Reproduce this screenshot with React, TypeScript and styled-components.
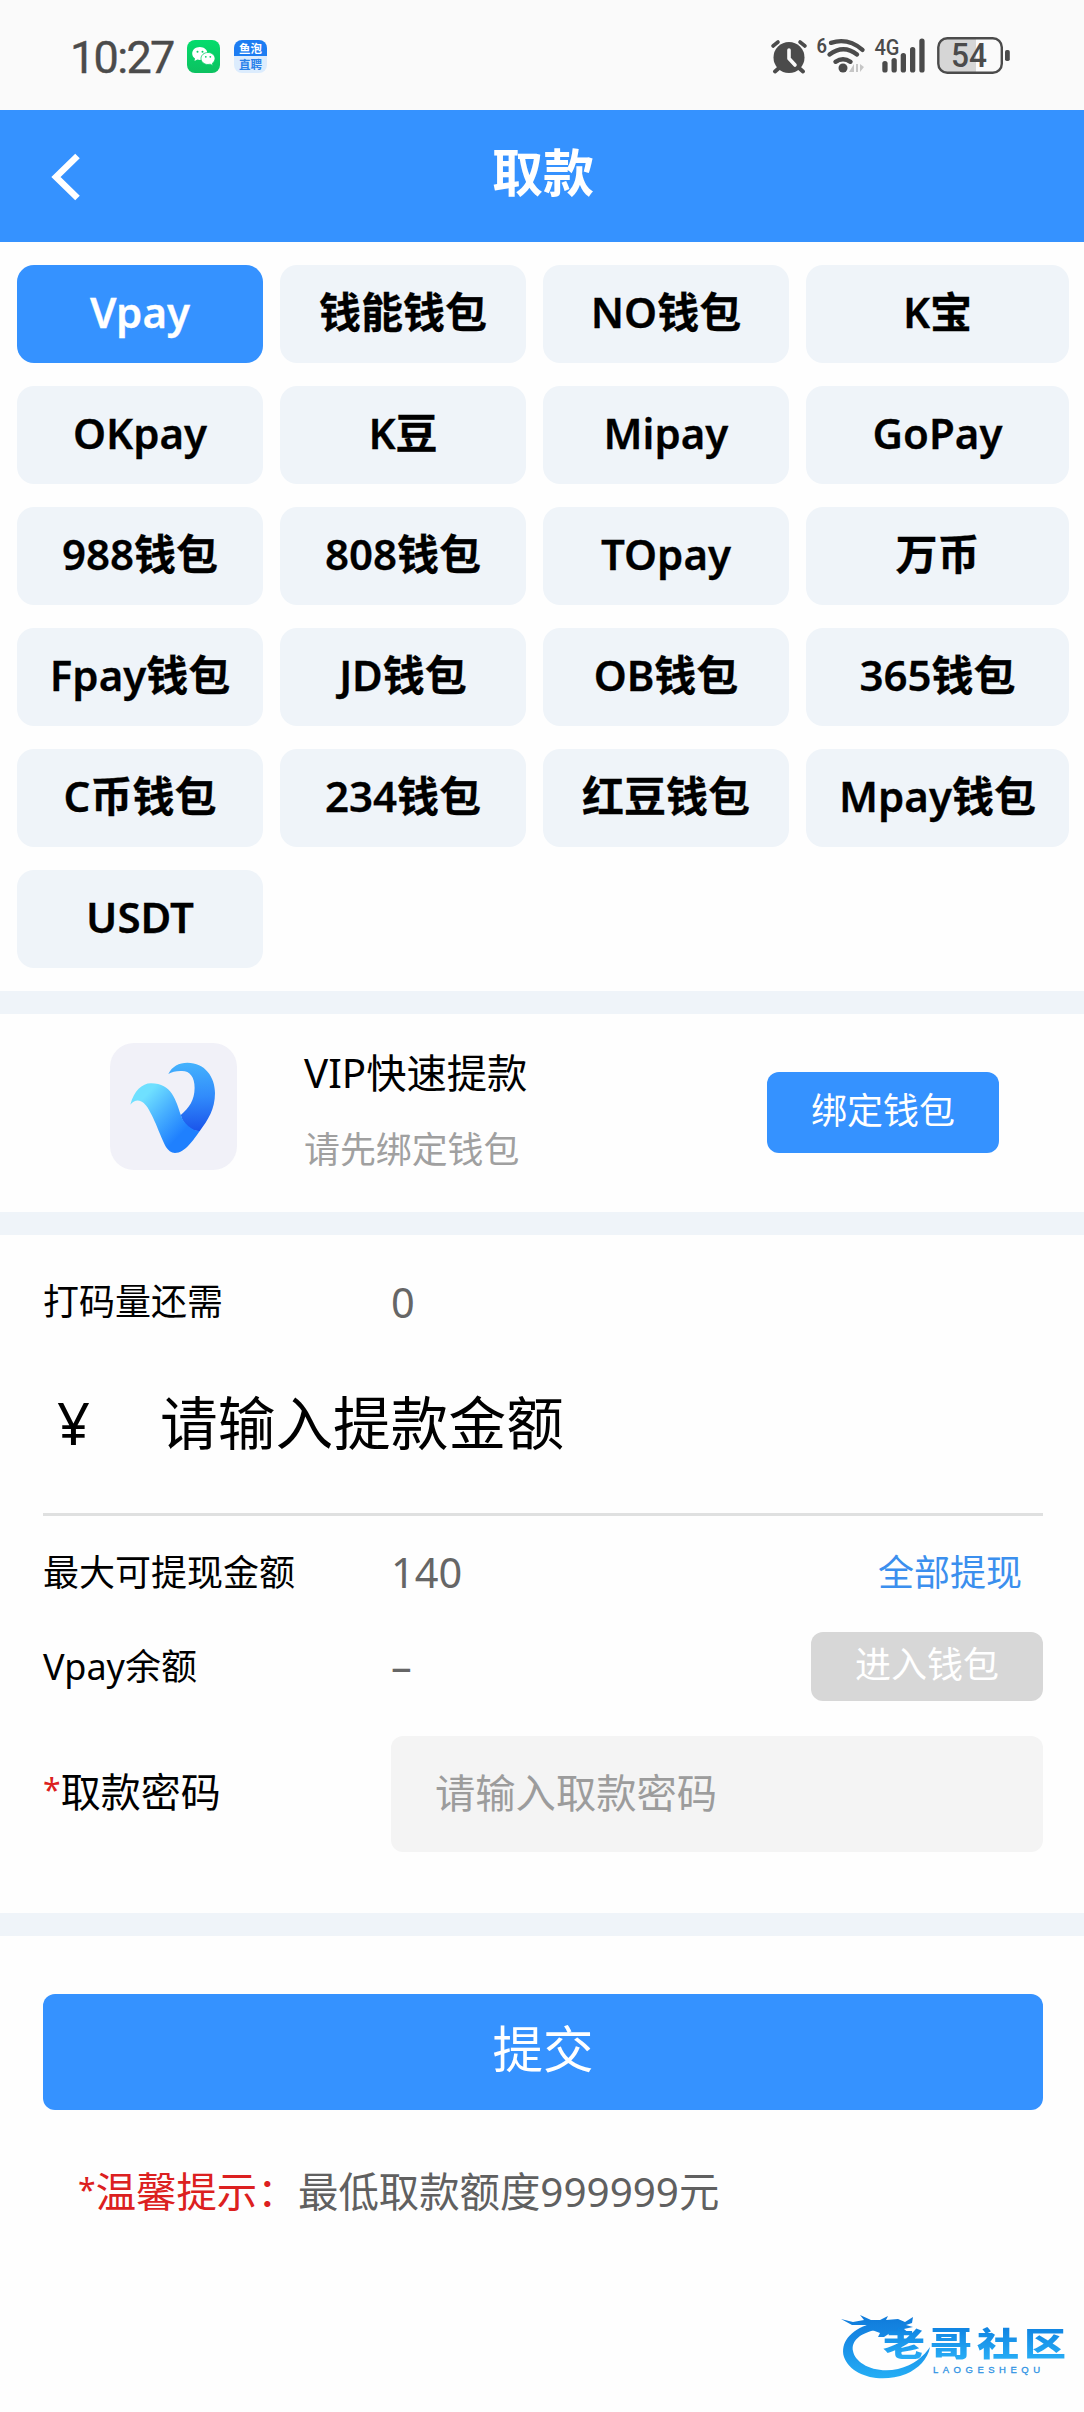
import React, { useState } from "react";
import styled, { createGlobalStyle } from "styled-components";

const sans = `"Noto Sans", "Noto Sans CJK SC", sans-serif`;
const blue = "#3592ff";
const ink = "#4b4b4b";

const GlobalStyle = createGlobalStyle`
  * { box-sizing: border-box; }
  body { margin: 0; background: #fff; }
  button, input { font: inherit; border: 0; padding: 0; margin: 0; }
`;

const Page = styled.div`
  display: flex;
  flex-direction: column;
  width: 1084px;
  height: 2412px;
  background: #fefefe;
  color: #000;
  font-family: ${sans};
  overflow: hidden;
`;

const StatusBar = styled.header`
  display: flex;
  align-items: flex-start;
  justify-content: space-between;
  height: 110px;
  padding: 27px 74px 0 70px;
  background: #fafafa;
  color: ${ink};
`;

const StatusLeft = styled.div`
  display: flex;
  padding-top: 13px;
`;

const Clock = styled.span`
  width: 117px;
  font: 400 45px/36px Roboto, sans-serif;
  letter-spacing: -1.7px;
  -webkit-text-stroke: 0.4px ${ink};
`;

const AppBadge = styled.span`
  display: flex;
  flex-direction: column;
  width: 33px;
  height: 33px;
  margin-right: 14px;
  border-radius: 8px;
  background: linear-gradient(#03dc6c, #0cc160);
`;

const JobBadge = styled(AppBadge)`
  background: linear-gradient(#1d7df2 0 49%, #dcecfd 49% 100%);
`;

const BadgeLine = styled.span<{ $solid?: boolean }>`
  height: 16px;
  font: 700 11.5px/18px ${sans};
  text-align: center;
  color: ${(p) => (p.$solid ? "#fff" : "#2a82ea")};
`;

const StatusIcons = styled.svg`
  display: block;
  width: 240px;
  height: 50px;
`;

const TitleBar = styled.div`
  display: grid;
  grid-template-columns: 130px 1fr 130px;
  align-items: center;
  height: 132px;
  background: ${blue};
  color: #fff;
`;

const BackButton = styled.button`
  display: flex;
  padding: 2px 0 0 51px;
  background: none;
`;

const Title = styled.h1`
  margin: 0;
  padding: 0 0 8px 2px;
  font-size: 51px;
  line-height: 60px;
  font-weight: 700;
  text-align: center;
`;

const WalletGrid = styled.div`
  display: grid;
  grid-template-columns: 246px 246px 246px 263px;
  grid-auto-rows: 98px;
  gap: 23px 17px;
  padding: 23px 15px 23px 17px;
`;

const WalletTab = styled.button<{ $active: boolean }>`
  padding-bottom: 4px;
  border-radius: 17px;
  background: ${(p) => (p.$active ? blue : "#eff4f9")};
  color: ${(p) => (p.$active ? "#fff" : "#000")};
  font-size: 42px;
  line-height: 56px;
  font-weight: 600;
  -webkit-text-stroke: 0.3px currentColor;
  white-space: nowrap;
`;

const Band = styled.div`
  flex: none;
  height: 23px;
  background: #eff4f9;
`;

const BindSection = styled.section`
  display: flex;
  height: 198px;
  padding: 29px 85px 0 110px;
`;

const LogoTile = styled.div`
  width: 127px;
  height: 127px;
  border-radius: 24px;
  background: #f1f1f8;
`;

const BindText = styled.div`
  flex: 1;
  padding-left: 67px;
`;

const BindTitle = styled.div`
  font-size: 40.3px;
  line-height: 60px;
`;

const BindNote = styled.div`
  padding-top: 17px;
  font-size: 35.9px;
  line-height: 60px;
  color: #a0a0a0;
`;

const SmallButton = styled.button<{ $tall?: boolean }>`
  width: 232px;
  height: ${(p) => (p.$tall ? 81 : 69)}px;
  margin-top: ${(p) => (p.$tall ? 29 : 0)}px;
  padding-bottom: 4px;
  border-radius: 12px;
  background: ${(p) => (p.$tall ? blue : "#d7d7d7")};
  color: #fff;
  font-size: 36px;
  line-height: 50px;
`;

const Form = styled.section`
  display: flex;
  flex-direction: column;
  height: 678px;
  padding: 0 41px 0 43px;
`;

const FormRow = styled.div<{ $h: number; $gap?: number }>`
  display: grid;
  grid-template-columns: 348px 1fr auto;
  align-items: center;
  height: ${(p) => p.$h}px;
  margin-bottom: ${(p) => p.$gap ?? 0}px;
`;

const Label = styled.span<{ $big?: boolean }>`
  padding-bottom: ${(p) => (p.$big ? 4 : 0)}px;
  font-size: ${(p) => (p.$big ? 40 : 36)}px;
  line-height: 60px;
`;

const Star = styled.span`
  font-size: 32px;
  line-height: 0;
  vertical-align: 5px;
  color: #dc2020;
`;

const Value = styled.span`
  padding-bottom: 1px;
  font-size: 41.5px;
  line-height: 60px;
  color: #666;
`;

const AllLink = styled.a`
  padding-right: 21px;
  font-size: 36px;
  line-height: 60px;
  color: #3b8fee;
`;

const AmountRow = styled.label`
  display: grid;
  grid-template-columns: 117px 1fr;
  align-items: center;
  box-sizing: content-box;
  height: 107px;
  padding-bottom: 37px;
  font-size: 57.7px;
  line-height: 80px;
  border-bottom: 3px solid #dfe0e0;
`;

const Currency = styled.span`
  padding-left: 14px;
`;

const AmountInput = styled.input`
  width: 100%;
  height: 90px;
  background: none;
  outline: 0;
  &::placeholder { color: #000; opacity: 1; }
`;

const PasswordInput = styled.input`
  grid-column: 2 / 4;
  height: 116px;
  padding: 0 44px 4px;
  border-radius: 12px;
  background: #f4f4f4;
  outline: 0;
  font-size: 40.3px;
  &::placeholder { color: #9c9c9c; opacity: 1; }
`;

const SubmitButton = styled.button`
  flex: none;
  height: 116px;
  margin: 58px 41px 0 43px;
  padding-bottom: 7px;
  border-radius: 12px;
  background: ${blue};
  color: #fff;
  font-size: 50.5px;
  line-height: 70px;
`;

const Hint = styled.p`
  display: flex;
  margin: 52px 0 0 78px;
  font-size: 40.4px;
  line-height: 60px;
  color: #606060;
`;

const HintLead = styled.span`
  width: 220px;
  white-space: nowrap;
  color: #dc2020;
`;

const Watermark = styled.footer`
  display: flex;
  align-self: flex-end;
  width: 244px;
  height: 80px;
  margin-top: 83px;
`;

const Dragon = styled.svg`
  flex: none;
  width: 94px;
  height: 80px;
  margin-right: -51px;
`;

const MarkText = styled.div`
  display: flex;
  flex-direction: column;
  padding-top: 14px;
`;

const MarkName = styled.span`
  height: 46px;
  font: 900 42px/46px "Noto Sans CJK SC", sans-serif;
  letter-spacing: 5px;
  white-space: nowrap;
  transform: scaleY(0.78);
  color: transparent;
  background: linear-gradient(#0d7fe0, #28aef6);
  background-clip: text;
`;

const MarkLatin = styled.span`
  padding-left: 50px;
  font: 400 9.5px/10px "Liberation Sans", sans-serif;
  letter-spacing: 4.5px;
  color: #2f93e4;
  -webkit-text-stroke: 0.3px #2f93e4;
`;

const wallets = [
  "Vpay", "钱能钱包", "NO钱包", "K宝",
  "OKpay", "K豆", "Mipay", "GoPay",
  "988钱包", "808钱包", "TOpay", "万币",
  "Fpay钱包", "JD钱包", "OB钱包", "365钱包",
  "C币钱包", "234钱包", "红豆钱包", "Mpay钱包",
  "USDT",
];

const WeChatIcon = () => (
  <svg width="33" height="33" viewBox="0 0 33 33">
    <path d="M12.8 7C8.500 7 5.200 9.800 5.200 13.500c0 2.100 1.100 3.900 2.800 5.100l-.5 2.500 2.900-1.500c.8.200 1.600.3 2.400.3 4.300 0 7.700-2.800 7.700-6.400S17.100 7 12.800 7z" fill="#fff" />
    <path d="M21 12.500c-4 0-7 2.700-7 6s3 6 7 6c.8 0 1.500-.1 2.200-.3l2.700 1.300-.5-2.300c1.600-1.100 2.600-2.800 2.600-4.700 0-3.300-3-6-7-6z" fill="#fff" stroke="#08cf67" strokeWidth=".8" />
    <circle cx="10.500" cy="11.700" r="1" fill="#08cf67" />
    <circle cx="15.500" cy="11.700" r="1" fill="#08cf67" />
    <circle cx="18.800" cy="16.800" r=".9" fill="#08cf67" />
    <circle cx="23.300" cy="16.800" r=".9" fill="#08cf67" />
  </svg>
);

const SystemIcons = () => (
  <StatusIcons viewBox="770 27 240 50" fill={ink} stroke="none">
    <g strokeLinecap="round" stroke={ink} fill="none">
      <path d="M773 46l5-4M805 46l-5-4" strokeWidth="3.600" />
      <path d="M779 68l-4 3.500M799 68l4 3.500" strokeWidth="4" />
    </g>
    <circle cx="789" cy="57.500" r="15.500" />
    <path d="M789 50v8.500l6 6.500" fill="none" stroke="#fafafa" strokeWidth="3.600" strokeLinecap="round" strokeLinejoin="round" />
    <text x="816.500" y="53" fontSize="21" fontWeight="600" fontFamily="Roboto" textLength="10.500" lengthAdjust="spacingAndGlyphs">6</text>
    <g fill="none" stroke={ink} strokeWidth="4.400" strokeLinecap="round">
      <path d="M831 42.800q17-5.500 31.500 7" />
      <path d="M829.500 54.500q14-10.500 27.500 0" />
      <path d="M835.500 61.800q7.500-5 15 0" />
    </g>
    <circle cx="843" cy="68" r="4.500" />
    <path d="M854 64v8h-5zM858 64v8h-2v-8zM860 64v8l4-5z" fill="#c6c6c6" />
    <text x="874.500" y="55" fontSize="22" fontWeight="500" fontFamily="Roboto" textLength="25" lengthAdjust="spacingAndGlyphs">4G</text>
    <rect x="882.300" y="61" width="5.300" height="11.500" rx="2.600" />
    <rect x="891.500" y="58" width="5.300" height="14.500" rx="2.600" />
    <rect x="900.700" y="53" width="5.300" height="19.500" rx="2.600" />
    <rect x="910" y="47" width="5.300" height="25.500" rx="2.600" />
    <rect x="919.300" y="38.500" width="5.300" height="34" rx="2.600" />
    <path d="M947 38h29v35h-29q-8 0-8-8V46q0-8 8-8z" fill="#d6d6d6" />
    <rect x="938.300" y="38.200" width="63.500" height="34.600" rx="9" fill="none" stroke={ink} strokeWidth="2.400" />
    <rect x="1005" y="50" width="4.800" height="11" rx="1.800" />
    <text x="951" y="67" fontSize="32.500" fontWeight="500" fontFamily="Roboto" textLength="36" lengthAdjust="spacingAndGlyphs">54</text>
  </StatusIcons>
);

const VpayLogo = () => (
  <svg width="127" height="127" viewBox="0 0 127 127">
    <defs>
      <linearGradient id="wing" x1="85" y1="20" x2="88" y2="88" gradientUnits="userSpaceOnUse">
        <stop stopColor="#44b2fd" />
        <stop offset=".5" stopColor="#318bfb" />
        <stop offset="1" stopColor="#1a54ea" />
      </linearGradient>
      <linearGradient id="stem" x1="36" y1="52" x2="74" y2="88" gradientUnits="userSpaceOnUse">
        <stop stopColor="#6fe0ff" />
        <stop offset=".5" stopColor="#46aeff" />
        <stop offset="1" stopColor="#1f80fe" />
      </linearGradient>
    </defs>
    <path fill="url(#wing)" d="M58.300 31C62 23.500 69 19.700 77.400 19.700C95 19.700 105 34 105 50C105 66 98 77 89.800 88C82 89 73 82 70.800 72C79 65 84.600 57 84.600 45C84.600 34 80 28 72 28C66.500 27.800 62 28.600 58.300 31Z" />
    <path fill="url(#stem)" d="M20.300 61.700C24 48 32 40.300 41 40.300C62 40.300 66 58 70.800 72C73 80 82 88 89.800 88C84 96 75 110 65 110C57 110 54 100 50 91C46 81 43 74 39 67C34 58 27 54 20.300 61.700Z" />
  </svg>
);

const DragonMark = () => (
  <Dragon viewBox="0 0 94 80">
    <defs>
      <linearGradient id="scale" x1="0" y1="0" x2="0" y2="80" gradientUnits="userSpaceOnUse">
        <stop stopColor="#0b74d6" />
        <stop offset=".4" stopColor="#1788e4" />
        <stop offset="1" stopColor="#27b4f8" />
      </linearGradient>
    </defs>
    <g fill="url(#scale)">
      <path d="M30 19C10 25 0 38 4 52C11 71 40 79 66 69C78 64 88 54 90 42C84 51 74 60 58 64C34 69 15 58 13 46C11 36 20 28 36 25Z" />
      <path d="M1 14L13 17L24 15L20 10L31 15L40 15L48 11L46 15L58 14L65 17L73 12L72 18L66 20L73 22L64 24L70 29L58 27L50 28L44 32L38 32L40 28L32 25L26 20L12 20Z" />
    </g>
  </Dragon>
);

export default function App() {
  const [active, setActive] = useState("Vpay");
  return (
    <Page>
      <GlobalStyle />
      <StatusBar>
        <StatusLeft>
          <Clock>10:27</Clock>
          <AppBadge><WeChatIcon /></AppBadge>
          <JobBadge>
            <BadgeLine $solid>鱼泡</BadgeLine>
            <BadgeLine>直聘</BadgeLine>
          </JobBadge>
        </StatusLeft>
        <SystemIcons />
      </StatusBar>
      <TitleBar>
        <BackButton aria-label="返回">
          <svg width="30" height="48" viewBox="0 0 30 48">
            <path d="M26.500 3L5 24l21.500 21" fill="none" stroke="#fff" strokeWidth="6.500" />
          </svg>
        </BackButton>
        <Title>取款</Title>
      </TitleBar>
      <WalletGrid>
        {wallets.map((name) => (
          <WalletTab key={name} $active={name === active} onClick={() => setActive(name)}>
            {name}
          </WalletTab>
        ))}
      </WalletGrid>
      <Band />
      <BindSection>
        <LogoTile><VpayLogo /></LogoTile>
        <BindText>
          <BindTitle>VIP快速提款</BindTitle>
          <BindNote>请先绑定钱包</BindNote>
        </BindText>
        <SmallButton $tall>绑定钱包</SmallButton>
      </BindSection>
      <Band />
      <Form>
        <FormRow $h={134}>
          <Label>打码量还需</Label>
          <Value>0</Value>
        </FormRow>
        <AmountRow>
          <Currency>¥</Currency>
          <AmountInput placeholder="请输入提款金额" />
        </AmountRow>
        <FormRow $h={113} $gap={3}>
          <Label>最大可提现金额</Label>
          <Value>140</Value>
          <AllLink>全部提现</AllLink>
        </FormRow>
        <FormRow $h={69} $gap={35}>
          <Label>Vpay余额</Label>
          <Value>–</Value>
          <SmallButton>进入钱包</SmallButton>
        </FormRow>
        <FormRow $h={116}>
          <Label $big><Star>*</Star>取款密码</Label>
          <PasswordInput placeholder="请输入取款密码" />
        </FormRow>
      </Form>
      <Band />
      <SubmitButton>提交</SubmitButton>
      <Hint>
        <HintLead><Star>*</Star>温馨提示：</HintLead>
        <span>最低取款额度999999元</span>
      </Hint>
      <Watermark>
        <DragonMark />
        <MarkText>
          <MarkName>老哥社区</MarkName>
          <MarkLatin>LAOGESHEQU</MarkLatin>
        </MarkText>
      </Watermark>
    </Page>
  );
}
